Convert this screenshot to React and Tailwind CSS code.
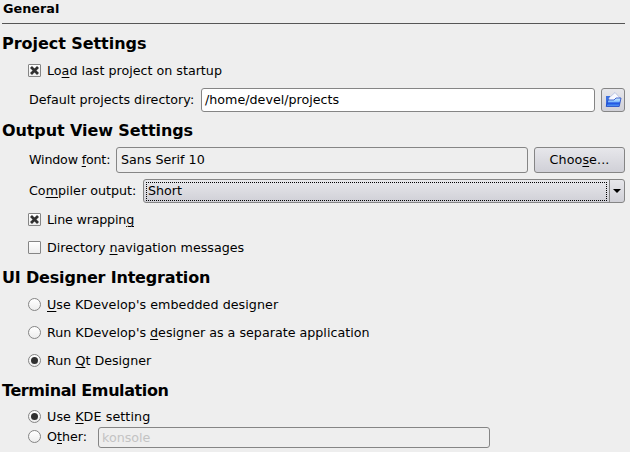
import React from "react";

const Heading = ({ className, children }) => (
  <h2 className={`flex h-6 items-center pl-0.5 text-[16px] font-bold whitespace-nowrap ${className}`}>{children}</h2>
);

const U = ({ children }) => (
  <span className="underline decoration-1 underline-offset-2">{children}</span>
);

function Check({ checked, className, children }) {
  return (
    <label className={`flex h-4 items-center gap-[6px] pl-7 whitespace-nowrap ${className}`}>
      <span className="flex size-[13px] shrink-0 items-center justify-center rounded-[1px] border border-[#858585] bg-linear-to-b from-white to-[#ededed]">
        {checked && (
          <svg width="9" height="9" viewBox="0 0 9 9">
            <path d="M1 1L8 8M8 1L1 8" stroke="#303030" strokeWidth="2.8" />
          </svg>
        )}
      </span>
      <span className="pt-0.5">{children}</span>
    </label>
  );
}

function Radio({ checked, className, children }) {
  return (
    <label className={`flex h-4 items-center gap-[6px] pl-7 whitespace-nowrap ${className}`}>
      <span className="flex size-[13px] shrink-0 items-center justify-center rounded-full border border-[#858585] bg-linear-to-b from-white to-[#ededed]">
        {checked && <span className="size-[7px] rounded-full bg-[#303030]" />}
      </span>
      <span className="pt-0.5">{children}</span>
    </label>
  );
}

function FolderIcon() {
  return (
    <svg width="17" height="16" viewBox="0 0 17 16">
      <defs>
        <linearGradient id="folder" x1="0" y1="0" x2="0" y2="1">
          <stop offset="0" stopColor="#d3ecff" />
          <stop offset=".4" stopColor="#8cc6ff" />
          <stop offset=".6" stopColor="#1d50e0" />
          <stop offset="1" stopColor="#5ba4f8" />
        </linearGradient>
      </defs>
      <path d="M1 4h4l1 2h8v8H1z" fill="#3c6fe0" />
      <path d="M4 6l6-5.5 5 5.5-2 3H4z" fill="#f7f9ff" stroke="#a9b4dc" strokeWidth=".7" />
      <path d="M1.2 14.5L3 8h6l2-2h5l-1.8 8.5z" fill="url(#folder)" stroke="#1c44c4" strokeWidth=".8" />
    </svg>
  );
}

const field = "flex items-center rounded-[3px] border border-[#858585] whitespace-nowrap";
const raised = "border-[#858585] bg-linear-to-b from-[#e7e7eb] to-[#d0d0d7]";

export default function App() {
  return (
    <main className="h-[452px] w-[630px] overflow-hidden bg-[#eeeeee] font-['DejaVu_Sans',sans-serif] text-[12.7px] leading-4 text-black">
      <h1 className="h-[23px] pt-px pl-[3px] text-[12.8px] font-bold">General</h1>
      <div className="ml-0.5 h-px w-[623px] bg-[#555555]" />

      <Heading className="mt-[8px] tracking-[-0.05px]">Project Settings</Heading>
      <Check checked className="mt-[6px]">Lo<U>a</U>d last project on startup</Check>
      <div className="mt-[10px] flex h-6 items-center pl-[29px] whitespace-nowrap">
        <span className="w-[172px]">Default projects directory:</span>
        <div className={`${field} h-6 w-[394px] bg-white pl-[3px]`}>/home/devel/projects</div>
        <button className={`${field} ${raised} ml-[6px] size-6 justify-center`}><FolderIcon /></button>
      </div>

      <Heading className="mt-[7px] tracking-[-0.1px]">Output View Settings</Heading>
      <div className="mt-[4px] flex h-[26px] items-center pl-[29px] whitespace-nowrap">
        <span className="w-[87px] tracking-[-0.2px]">Window <U>f</U>ont:</span>
        <div className={`${field} h-[26px] w-[412px] pl-[4px]`}>Sans Serif 10</div>
        <button className={`${field} ${raised} ml-[6px] h-[26px] w-[91px] justify-center tracking-[0.1px]`}><span>Choo<U>s</U>e...</span></button>
      </div>
      <div className="mt-[6px] flex h-6 items-center pl-[29px] whitespace-nowrap">
        <span className="w-[114px]">Co<U>m</U>piler output:</span>
        <div className={`${field} ${raised} h-6 w-[482px]`}>
          <div className="ml-[2px] flex h-[19px] w-[461px] items-center border border-dotted border-black pl-px">Short</div>
          <div className="ml-[2px] flex h-full flex-1 items-center justify-center border-l border-[#858585]">
            <svg width="8" height="4" viewBox="0 0 8 4"><path d="M0 0h8L4 4z" /></svg>
          </div>
        </div>
      </div>
      <Check checked className="mt-[8px] tracking-[-0.2px]">Line wrappin<U>g</U></Check>
      <Check className="mt-[12px]">Directory <U>n</U>avigation messages</Check>

      <Heading className="mt-[11px] tracking-[-0.18px]">UI Designer Integration</Heading>
      <Radio className="mt-[6px] tracking-[0.05px]"><U>U</U>se KDevelop's embedded designer</Radio>
      <Radio className="mt-[12px]">Run KDevelop's <U>d</U>esigner as a separate application</Radio>
      <Radio checked className="mt-[12px]">Run <U>Q</U>t Designer</Radio>

      <Heading className="mt-[11px] tracking-[-0.4px]">Terminal Emulation</Heading>
      <Radio checked className="mt-[5px] tracking-[0.1px]">Use <U>K</U>DE setting</Radio>
      <div className="mt-[3px] flex h-[21px] items-start">
        <Radio className="mt-px w-[98px]">O<U>t</U>her:</Radio>
        <div className={`${field} h-[21px] w-[392px] pl-[3px] text-[#c3c3c3]`}>konsole</div>
      </div>
    </main>
  );
}
